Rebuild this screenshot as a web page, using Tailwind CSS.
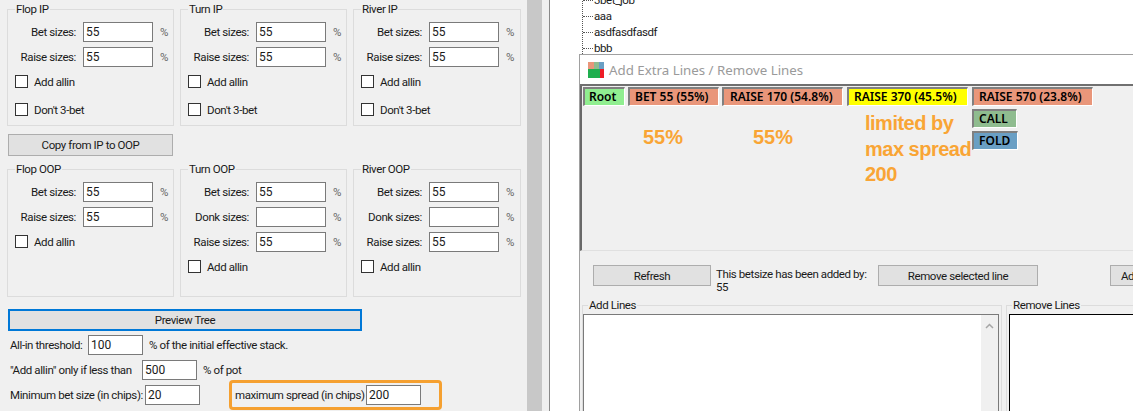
<!DOCTYPE html>
<html lang="en">
<head>
    <meta charset="UTF-8">
    <title>Add Extra Lines / Remove Lines</title>
    <script src="https://cdn.jsdelivr.net/npm/@tailwindcss/browser@4"></script>
</head>
<body class="bg-[#f0f0f0] text-[#1a1a1a] font-['Roboto',sans-serif] text-[11.5px] tracking-[-0.4px] leading-4 whitespace-nowrap">
<div class="relative flex w-[1133px] h-[411px] overflow-hidden">

    <!-- Left settings panel -->
    <div class="w-[527px] shrink-0 pl-[7px] pt-px">
        <div class="grid grid-cols-[167px_167px_168px] gap-x-[6px]">
            <fieldset class="h-[125px] border border-[#dcdcdc] pt-[5px]">
                <legend class="ml-[7px] px-px">Flop IP</legend>
                <div class="flex items-center h-5 mb-[5px]"><label class="w-[68px] text-right">Bet sizes:</label><input value="55" class="ml-[7px] w-[70px] h-5 bg-white border border-[#7a7a7a] pl-[2px] text-[12px] tracking-normal"><span class="ml-[7px] text-[#666]">%</span></div>
                <div class="flex items-center h-5 mb-[8px]"><label class="w-[68px] text-right">Raise sizes:</label><input value="55" class="ml-[7px] w-[70px] h-5 bg-white border border-[#7a7a7a] pl-[2px] text-[12px] tracking-normal"><span class="ml-[7px] text-[#666]">%</span></div>
                <div class="flex items-center h-[13px] ml-[7px] mb-[15px]"><input type="checkbox" class="appearance-none w-[13px] h-[13px] bg-white border border-[#333]"><span class="ml-[6px]">Add allin</span></div>
                <div class="flex items-center h-[13px] ml-[7px]"><input type="checkbox" class="appearance-none w-[13px] h-[13px] bg-white border border-[#333]"><span class="ml-[6px]">Don't 3-bet</span></div>
            </fieldset>
            <fieldset class="h-[125px] border border-[#dcdcdc] pt-[5px]">
                <legend class="ml-[7px] px-px">Turn IP</legend>
                <div class="flex items-center h-5 mb-[5px]"><label class="w-[68px] text-right">Bet sizes:</label><input value="55" class="ml-[7px] w-[70px] h-5 bg-white border border-[#7a7a7a] pl-[2px] text-[12px] tracking-normal"><span class="ml-[7px] text-[#666]">%</span></div>
                <div class="flex items-center h-5 mb-[8px]"><label class="w-[68px] text-right">Raise sizes:</label><input value="55" class="ml-[7px] w-[70px] h-5 bg-white border border-[#7a7a7a] pl-[2px] text-[12px] tracking-normal"><span class="ml-[7px] text-[#666]">%</span></div>
                <div class="flex items-center h-[13px] ml-[7px] mb-[15px]"><input type="checkbox" class="appearance-none w-[13px] h-[13px] bg-white border border-[#333]"><span class="ml-[6px]">Add allin</span></div>
                <div class="flex items-center h-[13px] ml-[7px]"><input type="checkbox" class="appearance-none w-[13px] h-[13px] bg-white border border-[#333]"><span class="ml-[6px]">Don't 3-bet</span></div>
            </fieldset>
            <fieldset class="h-[125px] border border-[#dcdcdc] pt-[5px]">
                <legend class="ml-[7px] px-px">River IP</legend>
                <div class="flex items-center h-5 mb-[5px]"><label class="w-[68px] text-right">Bet sizes:</label><input value="55" class="ml-[7px] w-[70px] h-5 bg-white border border-[#7a7a7a] pl-[2px] text-[12px] tracking-normal"><span class="ml-[7px] text-[#666]">%</span></div>
                <div class="flex items-center h-5 mb-[8px]"><label class="w-[68px] text-right">Raise sizes:</label><input value="55" class="ml-[7px] w-[70px] h-5 bg-white border border-[#7a7a7a] pl-[2px] text-[12px] tracking-normal"><span class="ml-[7px] text-[#666]">%</span></div>
                <div class="flex items-center h-[13px] ml-[7px] mb-[15px]"><input type="checkbox" class="appearance-none w-[13px] h-[13px] bg-white border border-[#333]"><span class="ml-[6px]">Add allin</span></div>
                <div class="flex items-center h-[13px] ml-[7px]"><input type="checkbox" class="appearance-none w-[13px] h-[13px] bg-white border border-[#333]"><span class="ml-[6px]">Don't 3-bet</span></div>
            </fieldset>
        </div>

        <button class="block mt-2 ml-px w-[165px] h-[22px] bg-[#e1e1e1] border border-[#adadad]">Copy from IP to OOP</button>

        <div class="grid grid-cols-[167px_167px_168px] gap-x-[6px] mt-[5px]">
            <fieldset class="h-[136px] border border-[#dcdcdc] pt-[5px]">
                <legend class="ml-[7px] px-px">Flop OOP</legend>
                <div class="flex items-center h-5 mb-[5px]"><label class="w-[68px] text-right">Bet sizes:</label><input value="55" class="ml-[7px] w-[70px] h-5 bg-white border border-[#7a7a7a] pl-[2px] text-[12px] tracking-normal"><span class="ml-[7px] text-[#666]">%</span></div>
                <div class="flex items-center h-5 mb-[8px]"><label class="w-[68px] text-right">Raise sizes:</label><input value="55" class="ml-[7px] w-[70px] h-5 bg-white border border-[#7a7a7a] pl-[2px] text-[12px] tracking-normal"><span class="ml-[7px] text-[#666]">%</span></div>
                <div class="flex items-center h-[13px] ml-[7px]"><input type="checkbox" class="appearance-none w-[13px] h-[13px] bg-white border border-[#333]"><span class="ml-[6px]">Add allin</span></div>
            </fieldset>
            <fieldset class="h-[136px] border border-[#dcdcdc] pt-[5px]">
                <legend class="ml-[7px] px-px">Turn OOP</legend>
                <div class="flex items-center h-5 mb-[5px]"><label class="w-[68px] text-right">Bet sizes:</label><input value="55" class="ml-[7px] w-[70px] h-5 bg-white border border-[#7a7a7a] pl-[2px] text-[12px] tracking-normal"><span class="ml-[7px] text-[#666]">%</span></div>
                <div class="flex items-center h-5 mb-[5px]"><label class="w-[68px] text-right">Donk sizes:</label><input value="" class="ml-[7px] w-[70px] h-5 bg-white border border-[#7a7a7a] pl-[2px] text-[12px] tracking-normal"><span class="ml-[7px] text-[#666]">%</span></div>
                <div class="flex items-center h-5 mb-[8px]"><label class="w-[68px] text-right">Raise sizes:</label><input value="55" class="ml-[7px] w-[70px] h-5 bg-white border border-[#7a7a7a] pl-[2px] text-[12px] tracking-normal"><span class="ml-[7px] text-[#666]">%</span></div>
                <div class="flex items-center h-[13px] ml-[7px]"><input type="checkbox" class="appearance-none w-[13px] h-[13px] bg-white border border-[#333]"><span class="ml-[6px]">Add allin</span></div>
            </fieldset>
            <fieldset class="h-[136px] border border-[#dcdcdc] pt-[5px]">
                <legend class="ml-[7px] px-px">River OOP</legend>
                <div class="flex items-center h-5 mb-[5px]"><label class="w-[68px] text-right">Bet sizes:</label><input value="55" class="ml-[7px] w-[70px] h-5 bg-white border border-[#7a7a7a] pl-[2px] text-[12px] tracking-normal"><span class="ml-[7px] text-[#666]">%</span></div>
                <div class="flex items-center h-5 mb-[5px]"><label class="w-[68px] text-right">Donk sizes:</label><input value="" class="ml-[7px] w-[70px] h-5 bg-white border border-[#7a7a7a] pl-[2px] text-[12px] tracking-normal"><span class="ml-[7px] text-[#666]">%</span></div>
                <div class="flex items-center h-5 mb-[8px]"><label class="w-[68px] text-right">Raise sizes:</label><input value="55" class="ml-[7px] w-[70px] h-5 bg-white border border-[#7a7a7a] pl-[2px] text-[12px] tracking-normal"><span class="ml-[7px] text-[#666]">%</span></div>
                <div class="flex items-center h-[13px] ml-[7px]"><input type="checkbox" class="appearance-none w-[13px] h-[13px] bg-white border border-[#333]"><span class="ml-[6px]">Add allin</span></div>
            </fieldset>
        </div>

        <button class="block mt-[12px] ml-px w-[354px] h-[22px] bg-[#e1e1e1] border-2 border-[#0078d7]">Preview Tree</button>

        <div class="flex items-center h-5 mt-[4px] ml-[3px]"><span class="w-[78px]">All-in threshold:</span><input value="100" class="w-[55px] h-5 bg-white border border-[#7a7a7a] pl-[2px] text-[12px] tracking-normal"><span class="ml-[6px]">% of the initial effective stack.</span></div>
        <div class="flex items-center h-5 mt-[5px] ml-[3px]"><span class="w-[132px]">"Add allin" only if less than</span><input value="500" class="w-[55px] h-5 bg-white border border-[#7a7a7a] pl-[2px] text-[12px] tracking-normal"><span class="ml-[6px]">% of pot</span></div>
        <div class="flex items-center h-5 mt-[5px] ml-[3px]"><span class="w-[135px]">Minimum bet size (in chips):</span><input value="20" class="w-[55px] h-5 bg-white border border-[#7a7a7a] pl-[2px] text-[12px] tracking-normal">
            <div class="flex items-center ml-[29px] w-[213px] h-[30px] shrink-0 border-[3px] border-[#f5a030] rounded-[4px] pl-[3px]"><span class="w-[131px]">maximum spread (in chips)</span><input value="200" class="w-[55px] h-5 bg-white border border-[#7a7a7a] pl-[2px] text-[12px] tracking-normal"></div>
        </div>
    </div>

    <!-- Splitter -->
    <div class="w-[15px] shrink-0 bg-[#c8c8c8]"></div>
    <div class="w-[7px] shrink-0"></div>

    <!-- Tree behind the dialog -->
    <div class="flex-1 bg-white border-l border-[#8a8a8a] pl-[32px]">
        <div class="border-l border-dotted border-[#555] -mt-[8px]">
            <div class="flex items-center h-4"><span class="w-[10px] border-t border-dotted border-[#555]"></span><span class="ml-[1px]">3bet_job</span></div>
            <div class="flex items-center h-4"><span class="w-[10px] border-t border-dotted border-[#555]"></span><span class="ml-[1px]">aaa</span></div>
            <div class="flex items-center h-4"><span class="w-[10px] border-t border-dotted border-[#555]"></span><span class="ml-[1px]">asdfasdfasdf</span></div>
            <div class="flex items-center h-4"><span class="w-[10px] border-t border-dotted border-[#555]"></span><span class="ml-[1px]">bbb</span></div>
        </div>
    </div>

    <!-- Dialog window -->
    <div class="absolute left-[579px] top-[54px] w-[620px] h-[400px] bg-[#f0f0f0] border-t border-l border-[#a0a0a0]">
        <div class="flex items-center h-[31px] bg-white border-b-2 border-[#707070] pl-[8px]">
            <svg width="16" height="16" viewBox="0 0 16 16" class="shrink-0">
                <rect width="6" height="7" fill="#e9967a"/>
                <rect x="6" width="5" height="7" fill="#8fbc8f"/>
                <rect x="11" width="5" height="7" fill="#6a9fc4"/>
                <rect y="7" width="12" height="9" fill="#1fae4e"/>
                <rect x="12" y="7" width="4" height="9" fill="#ee1c25"/>
            </svg>
            <span class="ml-[5px] font-['Noto_Sans',sans-serif] text-[13.3px] tracking-normal text-[#9a9a9a]">Add Extra Lines / Remove Lines</span>
        </div>

        <div class="flex h-[165px] border-l-2 border-[#696969] border-b border-b-[#e0e0e0] pl-[1px] pt-[1px] font-['Noto_Sans',sans-serif] text-[12px] font-semibold tracking-normal text-black">
            <div class="w-[42px] h-[19px] bg-[#90ee90] border-t-2 border-l-2 border-[#808080] border-r border-b border-r-white border-b-white flex items-center pl-[4px]">Root</div>
            <div class="ml-[3px] w-[91px]">
                <div class="h-[19px] bg-[#e9967a] border-t-2 border-l-2 border-[#808080] border-r border-b border-r-white border-b-white flex items-center pl-[5px]">BET 55 (55%)</div>
                <div class="ml-[15px] mt-[19px] font-['Liberation_Sans',sans-serif] font-bold text-[20px] leading-[25px] text-[#f9a535]">55%</div>
            </div>
            <div class="ml-[3px] w-[121px]">
                <div class="h-[19px] bg-[#e9967a] border-t-2 border-l-2 border-[#808080] border-r border-b border-r-white border-b-white flex items-center pl-[6px]">RAISE 170 (54.8%)</div>
                <div class="ml-[31px] mt-[19px] font-['Liberation_Sans',sans-serif] font-bold text-[20px] leading-[25px] text-[#f9a535]">55%</div>
            </div>
            <div class="ml-[4px] w-[121px]">
                <div class="h-[19px] bg-[#ffff00] border-t-2 border-l-2 border-[#808080] border-r border-b border-r-white border-b-white flex items-center pl-[5px]">RAISE 370 (45.5%)</div>
                <div class="ml-[18px] mt-[5px] font-['Liberation_Sans',sans-serif] font-bold text-[20px] tracking-[-0.5px] leading-[25.5px] text-[#f9a535]">limited by<br>max spread<br>200</div>
            </div>
            <div class="ml-[4px] w-[121px]">
                <div class="h-[19px] bg-[#e9967a] border-t-2 border-l-2 border-[#808080] border-r border-b border-r-white border-b-white flex items-center pl-[5px]">RAISE 570 (23.8%)</div>
                <div class="mt-[3px] w-[45px] h-[19px] bg-[#8fbc8f] border-t-2 border-l-2 border-[#808080] border-r border-b border-r-white border-b-white flex items-center pl-[5px]">CALL</div>
                <div class="mt-[3px] w-[46px] h-[19px] bg-[#6a9fc4] border-t-2 border-l-2 border-[#808080] border-r border-b border-r-white border-b-white flex items-center pl-[5px]">FOLD</div>
            </div>
        </div>

        <div class="flex h-[38px] pl-[13px] pt-[14px]">
            <button class="w-[118px] h-[21px] bg-[#e1e1e1] border border-[#adadad]">Refresh</button>
            <div class="ml-[5px] w-[157px] leading-[13px] pt-[3px]">This betsize has been added by:<br>55</div>
            <button class="ml-[5px] w-[160px] h-[21px] bg-[#e1e1e1] border border-[#adadad]">Remove selected line</button>
            <button class="ml-[72px] w-[80px] h-[21px] bg-[#e1e1e1] border border-[#adadad] text-left pl-[10px]">Add</button>
        </div>

        <div class="flex mt-[8px] pl-[2px]">
            <fieldset class="w-[420px] h-[120px] shrink-0 border border-[#dcdcdc]">
                <legend class="ml-[5px] px-px">Add Lines</legend>
                <div class="flex justify-end h-[100px] bg-white border border-[#7a7a7a] mt-px mr-[2px]">
                    <div class="w-[17px] bg-[#f0f0f0] flex justify-center pt-[8px]">
                        <svg width="9" height="6" viewBox="0 0 9 6"><path d="M1 5 L4.5 1.5 L8 5" fill="none" stroke="#a6a6a6" stroke-width="1.5"/></svg>
                    </div>
                </div>
            </fieldset>
            <fieldset class="ml-[4px] w-[200px] h-[120px] shrink-0 border border-[#dcdcdc]">
                <legend class="ml-[5px] px-px">Remove Lines</legend>
                <div class="h-[100px] bg-white border border-black ml-[2px] mt-px"></div>
            </fieldset>
        </div>
    </div>
</div>
</body>
</html>
